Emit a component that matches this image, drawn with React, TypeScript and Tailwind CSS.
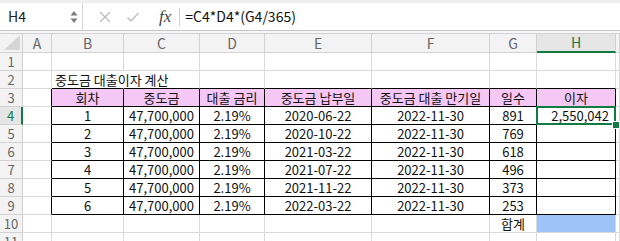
import React from 'react';

const LETTERS = ['A', 'B', 'C', 'D', 'E', 'F', 'G', 'H', ''];

type Cell = { text?: string; align?: 'left' | 'center' | 'right'; fill?: string };

const dataRows = [
  ['1', '47,700,000', '2.19%', '2020-06-22', '2022-11-30', '891', '2,550,042'],
  ['2', '47,700,000', '2.19%', '2020-10-22', '2022-11-30', '769', ''],
  ['3', '47,700,000', '2.19%', '2021-03-22', '2022-11-30', '618', ''],
  ['4', '47,700,000', '2.19%', '2021-07-22', '2022-11-30', '496', ''],
  ['5', '47,700,000', '2.19%', '2021-11-22', '2022-11-30', '373', ''],
  ['6', '47,700,000', '2.19%', '2022-03-22', '2022-11-30', '253', ''],
];

const headers = ['회차', '중도금', '대출 금리', '중도금 납부일', '중도금 대출 만기일', '일수', '이자'];

// sheet content, row number -> 9 cells (A..I)
function buildRow(r: number): Cell[] {
  const row: Cell[] = Array.from({ length: 9 }, () => ({}));
  if (r === 2) row[1] = { text: '중도금 대출이자 계산', align: 'left' };
  if (r === 3) headers.forEach((h, i) => (row[i + 1] = { text: h, align: 'center', fill: 'pink' }));
  if (r >= 4 && r <= 9) {
    dataRows[r - 4].forEach((v, i) => (row[i + 1] = { text: v, align: i === 6 ? 'right' : 'center' }));
  }
  if (r === 10) {
    row[6] = { text: '합계', align: 'center' };
    row[7] = { fill: 'blue' };
  }
  return row;
}

const inTable = (r: number, c: number) => r >= 3 && r <= 9 && c >= 1 && c <= 7;

const FormulaBar = () => (
  <div className="bg-[#efefef] pt-[3px]">
    <div className="flex h-[28px] items-center bg-white border-b border-[#c6c6c6]">
      <div className="flex h-full w-[83px] items-center border-r border-[#d4d4d4] pl-[8px] pr-[4px]">
        <span className="flex-1 text-[14px] text-[#222]">H4</span>
        <svg width="8" height="14" viewBox="0 0 8 14">
          <path d="M4 1 L7.5 5.5 L0.5 5.5 Z" fill="#7a7a7a" />
          <path d="M4 13 L7.5 8.5 L0.5 8.5 Z" fill="#7a7a7a" />
        </svg>
      </div>
      <div className="flex h-full items-center">
        <svg width="14" height="14" viewBox="0 0 14 14" className="ml-[15px]">
          <path d="M2 2 L12 12 M12 2 L2 12" stroke="#bdbdbd" strokeWidth="1.4" />
        </svg>
        <svg width="14" height="14" viewBox="0 0 14 14" className="ml-[14px]">
          <path d="M1.5 7.5 L5 11 L12.5 3" stroke="#bdbdbd" strokeWidth="1.4" fill="none" />
        </svg>
        <span className="ml-[19px] text-[17px] italic text-[#444] font-['Liberation_Serif',serif] leading-none">
          fx
        </span>
        <div className="ml-[8px] h-[18px] w-px bg-[#d0d0d0]" />
        <span className="ml-[5px] text-[14px] text-[#111]">=C4*D4*(G4/365)</span>
      </div>
    </div>
  </div>
);

export default function App() {
  const rows = Array.from({ length: 11 }, (_, i) => i + 1);
  return (
    <div className="w-[620px] h-[241px] overflow-hidden bg-white font-['Noto_Sans_CJK_KR','Noto_Sans',sans-serif]">
      <FormulaBar />
      <div className="h-[2px] bg-[#f7f7f7]" />
      <div className="grid grid-cols-[23px_29px_72px_76px_65px_107px_118px_47px_79px_1fr] grid-rows-[20px] auto-rows-[18px]">
        {/* column header */}
        <div className="relative bg-[#f3f3f3] border-r border-b border-t border-[#d2d2d2]">
          <svg width="18" height="16" viewBox="0 0 18 16" className="absolute right-[1px] bottom-[1px]">
            <path d="M17 0 L17 15 L1 15 Z" fill="#d6d6d6" />
          </svg>
        </div>
        {LETTERS.map((l, i) =>
          l === 'H' ? (
            <div
              key={i}
              className="flex items-center justify-center bg-[#e6e6e6] border-t border-r border-[#d2d2d2] border-b-2 border-b-[#107c41] text-[14px] text-[#107c41]"
            >
              {l}
            </div>
          ) : (
            <div
              key={i}
              className="flex items-center justify-center bg-[#f3f3f3] border-t border-r border-b border-[#d2d2d2] text-[14px] text-[#666]"
            >
              {l}
            </div>
          )
        )}

        {rows.map((r) => {
          const cells = buildRow(r);
          return (
            <React.Fragment key={r}>
              {r === 4 ? (
                <div className="flex items-center justify-center bg-[#e6e6e6] border-b border-[#d2d2d2] border-r-2 border-r-[#107c41] text-[13px] text-[#107c41]">
                  {r}
                </div>
              ) : (
                <div className="flex items-center justify-center bg-[#f3f3f3] border-b border-r border-[#d2d2d2] text-[13px] text-[#666]">
                  {r}
                </div>
              )}
              {cells.map((cell, c) => {
                const rightBlack = inTable(r, c) || inTable(r, c + 1);
                const bottomBlack = inTable(r, c) || inTable(r + 1, c);
                const overflow = r === 2 && c === 1;
                const rb = overflow
                  ? 'border-r-transparent'
                  : rightBlack
                  ? 'border-r-black'
                  : 'border-r-[#dadada]';
                const bb = bottomBlack ? 'border-b-black' : 'border-b-[#dadada]';
                const bg =
                  cell.fill === 'pink' ? 'bg-[#f5c7f5]' : cell.fill === 'blue' ? 'bg-[#9dc3f8]' : '';
                const al =
                  cell.align === 'right'
                    ? 'justify-end pr-[6px]'
                    : cell.align === 'left'
                    ? 'justify-start pl-[3px]'
                    : 'justify-center';
                const selected = r === 4 && c === 7;
                return (
                  <div
                    key={c}
                    className={`relative flex items-center whitespace-nowrap border-r border-b text-[13px] text-[#111] ${rb} ${bb} ${bg} ${al} ${overflow ? 'overflow-visible z-10' : 'overflow-hidden'} ${selected ? 'overflow-visible z-20' : ''}`}
                  >
                    {cell.text}
                    {selected && (
                      <>
                        <div className="absolute left-[-1px] top-[-1px] right-[-1px] bottom-[-1px] border-2 border-[#107c41] pointer-events-none" />
                        <div className="absolute right-[-4px] bottom-[-4px] w-[6px] h-[6px] bg-[#107c41] outline outline-1 outline-white" />
                      </>
                    )}
                  </div>
                );
              })}
            </React.Fragment>
          );
        })}
      </div>
    </div>
  );
}
